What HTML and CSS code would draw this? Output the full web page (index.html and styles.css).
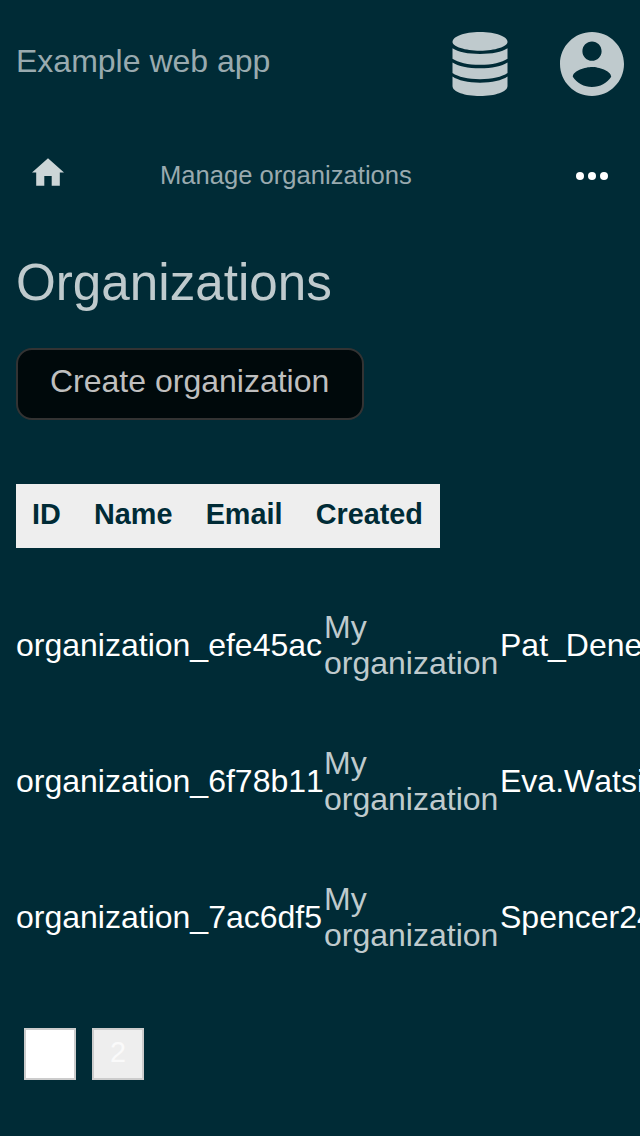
FILE: index.html
```html
<!DOCTYPE html>
<html lang="en">
<head>
<meta charset="utf-8">
<title>Organizations</title>
<link rel="stylesheet" href="styles.css">
</head>
<body>
<header class="topbar">
  <div class="brand">Example web app</div>
  <svg class="icon-db" viewBox="0 0 56 64" aria-hidden="true">
    <path d="M.5 10C.5 4.500 12 0 28 0s27.500 4.500 27.500 10C55.500 14.500 43 18.700 28 18.700S.5 14.500 .5 10z"/>
    <path d="M.5 16.300C6 20 16 22 28 22s22-2 27.500-5.700V26.700C50 30.500 40 32.800 28 32.800S6 30.500 .5 26.700z"/>
    <path d="M.5 30.400C6 34.200 16 36.300 28 36.300s22-2.100 27.500-5.900V41C50 44.900 40 47.200 28 47.200S6 44.900 .5 41z"/>
    <path d="M.5 44.600C6 48.500 16 50.700 28 50.700s22-2.200 27.500-6.100V54C55.500 60 43 64 28 64S.5 60 .5 54z"/>
  </svg>
  <svg class="icon-user" viewBox="2 2 20 20" aria-hidden="true">
    <path d="M12 2C6.480 2 2 6.480 2 12s4.480 10 10 10 10-4.480 10-10S17.520 2 12 2zm0 3c1.660 0 3 1.340 3 3s-1.340 3-3 3-3-1.340-3-3 1.340-3 3-3zm0 14.200c-2.500 0-4.710-1.280-6-3.220.03-1.990 4-3.080 6-3.080 1.990 0 5.970 1.090 6 3.080-1.290 1.940-3.500 3.220-6 3.220z"/>
  </svg>
</header>
<nav class="crumbs">
  <svg class="icon-home" viewBox="0 0 32 28" aria-hidden="true"><path d="M16 .3 32 14.500h-4.200v13.200h-8.100V18h-7.400v9.700H4.200V14.500H0z"/></svg>
  <span class="crumb">Manage organizations</span>
  <svg class="icon-more" viewBox="0 0 32 8" aria-hidden="true"><circle cx="4" cy="4" r="4"/><circle cx="16" cy="4" r="4"/><circle cx="28" cy="4" r="4"/></svg>
</nav>
<main class="content">
  <h1 class="title">Organizations</h1>
  <button class="create">Create organization</button>
  <div class="table">
    <div class="thead"><span>ID</span><span>Name</span><span>Email</span><span>Created</span></div>
    <div class="row"><span class="id">organization_efe45ac</span><span class="name">My organization</span><span class="email">Pat_Denesik</span></div>
    <div class="row"><span class="id">organization_6f78b11</span><span class="name">My organization</span><span class="email">Eva.Watsica</span></div>
    <div class="row"><span class="id">organization_7ac6df5</span><span class="name">My organization</span><span class="email">Spencer24</span></div>
  </div>
  <div class="pager"><span class="page current">1</span><span class="page">2</span></div>
</main>
</body>
</html>
```

FILE: styles.css
```css
* { box-sizing: border-box; }
body {
  margin: 0;
  height: 1136px;
  overflow: hidden;
  background: #002b36;
  color: #bfcacd;
  font: 32px/36px "Liberation Sans", Arial, sans-serif;
}
.topbar {
  display: flex;
  align-items: center;
  height: 128px;
  padding: 0 16px;
}
.brand { flex: 1; padding-bottom: 6px; color: #99aaaf; }
.icon-db { width: 56px; height: 64px; margin-right: 52px; fill: #bfcacd; }
.icon-user { width: 64px; height: 64px; fill: #bfcacd; }
.crumbs {
  display: flex;
  align-items: center;
  height: 96px;
  padding: 0 32px;
}
.icon-home { width: 32px; height: 28px; margin-bottom: 8px; fill: #ccd5d7; }
.crumb { flex: 1; margin-left: 96px; padding-bottom: 2px; font-size: 25.6px; color: #99aaaf; }
.icon-more { width: 32px; height: 8px; fill: #fff; }
.content { padding: 0 16px; }
.title {
  height: 124px;
  margin: 0;
  padding-top: 30px;
  font-size: 51.2px;
  font-weight: 400;
  line-height: 58px;
}
.create {
  display: block;
  width: 348px;
  height: 72px;
  padding: 0 32px 6px;
  border: 2px solid #333;
  border-radius: 16px;
  background: #00090b;
  color: #bfbfbf;
  font: inherit;
  text-align: left;
}
.table { margin-top: 64px; }
.thead {
  display: flex;
  width: 424px;
  height: 64px;
  padding: 12px 16px 0;
  gap: 33.200px;
  background: #eee;
  color: #002b36;
  font-size: 28.8px;
  font-weight: 700;
}
.row {
  display: grid;
  grid-template-columns: 306px 174px 138px;
  column-gap: 2px;
  align-items: center;
  height: 72px;
  margin-top: 64px;
}
.thead + .row { margin-top: 61px; }
.id, .email {
  color: #fff;
  white-space: nowrap;
  font-kerning: none;
}
.pager { display: flex; gap: 16px; padding: 75px 8px 0; }
.page {
  width: 52px;
  height: 52px;
  border: 2px solid #ccc;
  background: #eee;
  color: #fafafa;
  font-size: 28.8px;
  line-height: 45px;
  text-align: center;
}
.current { background: #fff; color: #fff; }
```
